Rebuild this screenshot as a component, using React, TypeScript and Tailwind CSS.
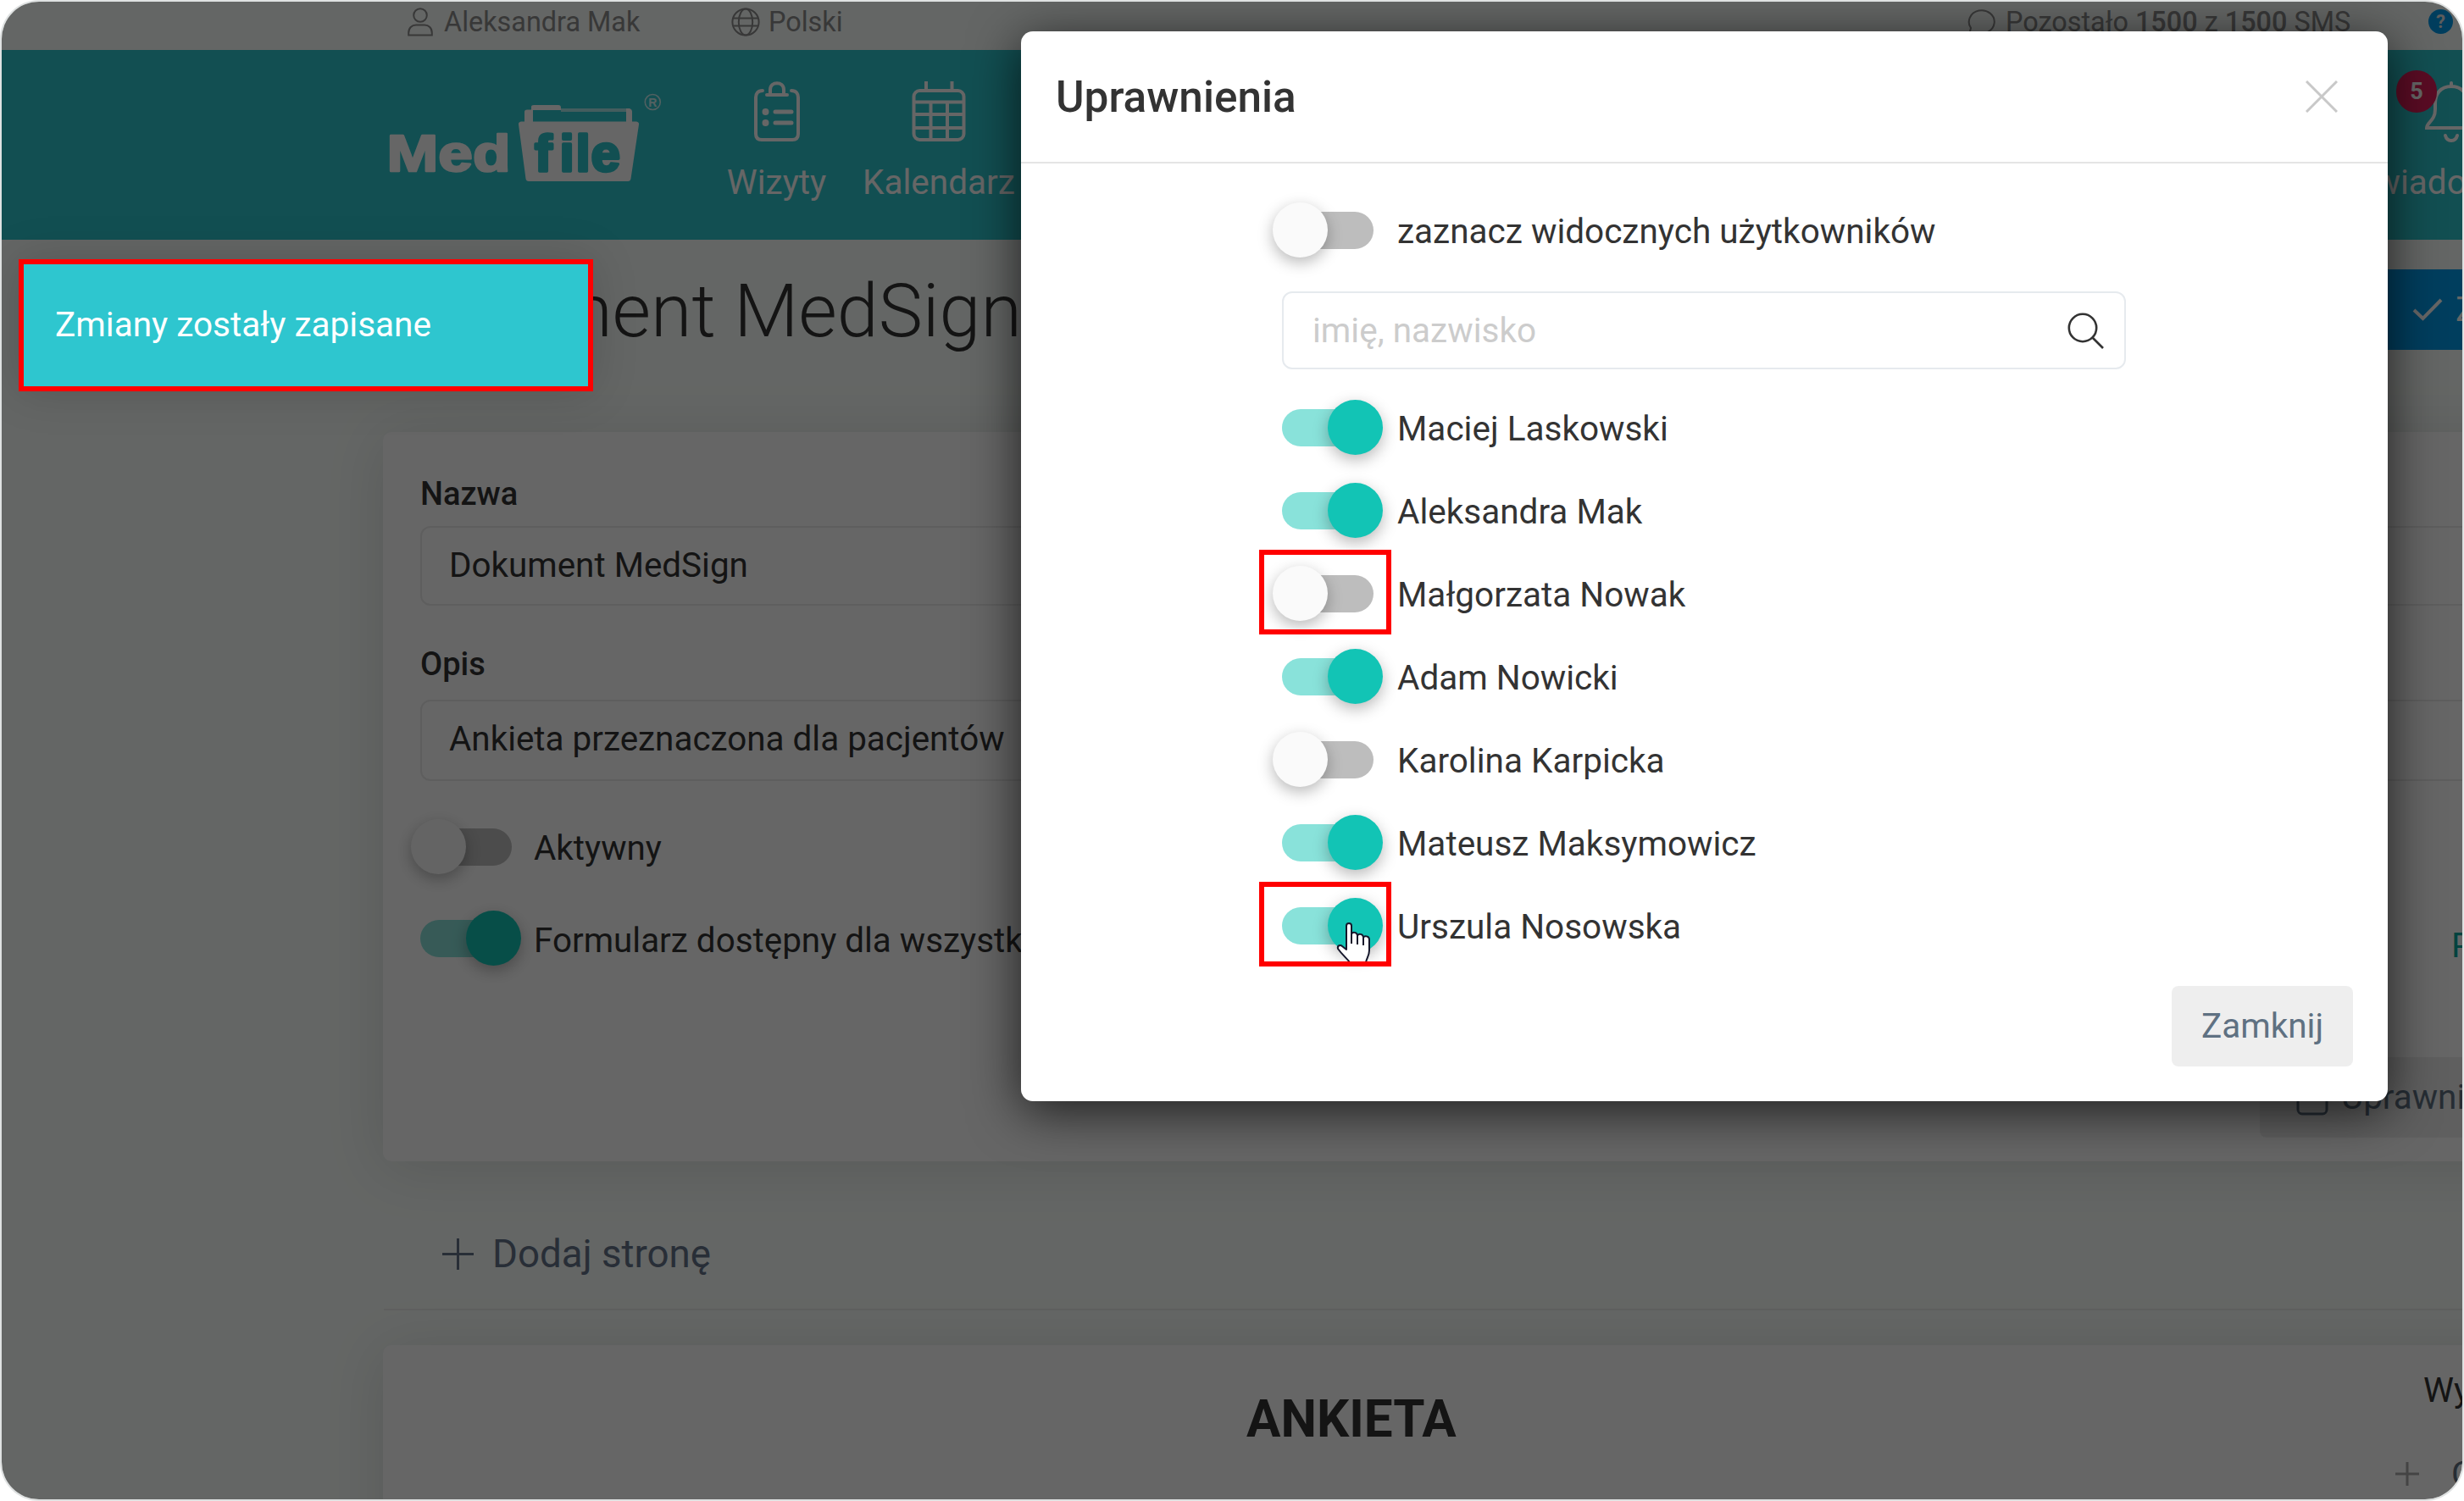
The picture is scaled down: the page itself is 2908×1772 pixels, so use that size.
type ToggleProps = {
  on: boolean
  marked?: boolean
  cursor?: boolean
}

const users = [
  { name: 'Maciej Laskowski', on: true },
  { name: 'Aleksandra Mak', on: true },
  { name: 'Małgorzata Nowak', on: false, marked: true },
  { name: 'Adam Nowicki', on: true },
  { name: 'Karolina Karpicka', on: false },
  { name: 'Mateusz Maksymowicz', on: true },
  { name: 'Urszula Nosowska', on: true, marked: true, cursor: true },
]

function HandCursor() {
  return (
    <svg className="absolute left-[64px] top-[28px]" width="42" height="54" viewBox="0 0 42 54">
      <path
        d="M12 33 V5 C12 1 18 1 18 5 V19 L18 15 C19 12 24 12 25 16 V20 V17 C26 14 31 14 32 18 V22 V19 C33 16 39 17 39 21 V34 C39 40 36 43 35 48 V52 H16 V48 C12 43 7 39 2 32 C1 28 5 27 7 29 L12 33 Z"
        fill="#fff"
        stroke="#15172b"
        strokeWidth="2"
        strokeLinejoin="round"
      />
      <path d="M18 14 V26 M25 17 V27 M32 19 V28" stroke="#15172b" strokeWidth="2" />
    </svg>
  )
}

function Toggle({ on, marked, cursor }: ToggleProps) {
  return (
    <div className="relative flex h-[66px] w-[108px] shrink-0 items-center">
      <div className={on ? 'h-[44px] w-full rounded-full bg-[#89e2da]' : 'h-[44px] w-full rounded-full bg-[#bdbdbd]'} />
      <div
        className={
          on
            ? 'absolute -right-[11px] top-0 size-[65px] rounded-full bg-[#12c4b5] shadow-[0_6px_18px_rgba(0,0,0,0.28)]'
            : 'absolute -left-[11px] top-0 size-[65px] rounded-full bg-[#fafafa] shadow-[0_6px_18px_rgba(0,0,0,0.28)]'
        }
      />
      {cursor && <HandCursor />}
      {marked && <div className="absolute -left-[27px] -top-[19px] h-[100px] w-[156px] border-[6px] border-[#ff0000]" />}
    </div>
  )
}

function TopBar() {
  return (
    <div className="relative flex h-[57px] shrink-0 items-center pb-[9px] pl-[479px] text-[32.4px] leading-[40px] text-[#8c8c8c]">
      <svg width="30" height="34" viewBox="0 0 30 34" fill="none" stroke="#8c8c8c" strokeWidth="2">
        <circle cx="15" cy="9" r="7.8" />
        <path d="M1.2 32.6 V30 C1.2 24 5 20.5 10 20.5 H20 C25 20.5 28.8 24 28.8 30 V32.6 Z" />
      </svg>
      <span className="ml-[13px] w-[339px]">Aleksandra Mak</span>
      <svg width="34" height="34" viewBox="0 0 34 34" fill="none" stroke="#8c8c8c" strokeWidth="2">
        <circle cx="17" cy="17" r="15.6" />
        <ellipse cx="17" cy="17" rx="8.2" ry="15.6" />
        <path d="M2.5 12.5 H31.5 M2.5 21.5 H31.5" />
      </svg>
      <span className="ml-[10px] w-[1415px]">Polski</span>
      <svg className="mt-[2px]" width="34" height="34" viewBox="0 0 34 34" fill="none" stroke="#8c8c8c" strokeWidth="2">
        <path d="M2.5 29 L4 23 A15 13.6 0 1 1 10.5 28.2 Z" />
      </svg>
      <span className="ml-[11px] whitespace-nowrap">
        Pozostało <span className="font-medium">1500</span> z <span className="font-medium">1500</span> SMS
      </span>
      <div className="absolute left-[2864px] top-[9px] flex size-[29px] items-center justify-center rounded-full bg-[#009beb] text-[22px] font-bold text-[#e5e5e5]">
        ?
      </div>
    </div>
  )
}

function Logo() {
  return (
    <svg className="shrink-0" width="340" height="224" viewBox="450 59 340 224" fontFamily="Liberation Sans" fontWeight="700" strokeLinejoin="round">
      <text x="456.5" y="202" fontSize="60.5" fill="#fff" stroke="#fff" strokeWidth="2.5" textLength="146" lengthAdjust="spacingAndGlyphs">
        Med
      </text>
      <path d="M619 146 V132 Q619 129.5 622 129.5 H627 V126 Q627 124 630 124 H659 Q662 124 662 127 V130 H629 V146 Z" fill="#fff" />
      <path d="M662 130 H740" stroke="#fff" strokeOpacity="0.6" strokeWidth="4" />
      <path d="M739 128 H743 Q746 129 746 132 V146 H739 Z" fill="#fff" />
      <path d="M615 143.5 H751 Q754.5 144 754 147 L744.5 211 Q744 214 741 214 H624 Q621 214 620.5 211 L612 147 Q611.5 144 615 143.5 Z" fill="#fff" />
      <text x="631 660.5 679.5 697.5" y="201.5" fontSize="62" fill="#2ec6cd" stroke="#2ec6cd" strokeWidth="3.5">
        file
      </text>
      <circle cx="770.3" cy="120.5" r="9" fill="none" stroke="#fff" strokeOpacity="0.75" strokeWidth="1.6" />
      <text x="770.3" y="125.5" textAnchor="middle" fontSize="14" fill="#fff" fillOpacity="0.8">
        R
      </text>
    </svg>
  )
}

function Header() {
  return (
    <div className="flex h-[224px] shrink-0 bg-[#2ec6cd] pl-[448px] text-[40.5px] leading-[48px] text-white">
      <Logo />
      <div className="ml-[67px] flex w-[119px] shrink-0 flex-col items-center pt-[37px]">
        <svg width="56" height="72" viewBox="0 0 56 72" fill="none" stroke="#fff" strokeWidth="4" strokeLinecap="round">
          <path d="M11 11 C5 11 3 15 3 19 V62 Q3 69 10 69 H46 Q53 69 53 62 V19 C53 15 51 11 45 11" />
          <path d="M16 16 H40" />
          <path d="M20 15 V10 C20 -0.5 36 -0.5 36 10 V15" />
          <path d="M26 36 H45 M26 49 H45" strokeWidth="5" />
          <circle cx="14.5" cy="36" r="2" />
          <circle cx="14.5" cy="49" r="2" />
        </svg>
        <span className="mt-[23px]">Wizyty</span>
      </div>
      <div className="ml-[32px] flex w-[200px] shrink-0 flex-col items-center pt-[37px]">
        <svg width="64" height="72" viewBox="0 0 64 72" fill="none" stroke="#fff" strokeWidth="4">
          <rect x="2.5" y="11" width="59" height="58" rx="7" />
          <path d="M17 0 V11 M47.5 0 V11 M3 24.5 H61 M3 39 H61 M3 55 H61 M22.5 25 V69 M42 25 V69" />
        </svg>
        <span className="mt-[23px]">Kalendarz</span>
      </div>
      <div className="relative ml-[1545px] flex w-[280px] shrink-0 flex-col items-center pt-[37px]">
        <svg width="64" height="72" viewBox="0 0 64 72" fill="none" stroke="#fff" strokeWidth="4" strokeLinecap="round">
          <path d="M32 2 V6 M32 6 C19 6 13 15 13 26 V33 C13 47 3 48 3 55 H61 C61 48 51 47 51 33 V26 C51 15 45 6 32 6 Z" />
          <path d="M25 64 C27 72 37 72 39 64" />
        </svg>
        <span className="mt-[23px]">Powiadomienia</span>
        <div className="absolute left-[75px] top-[24px] flex h-[50px] w-[48px] items-center justify-center rounded-full bg-[#e01e5a] text-[27px] font-bold">
          5
        </div>
      </div>
    </div>
  )
}

function FormCard() {
  return (
    <div className="ml-[450px] mt-[97px] flex h-[861px] w-[2600px] shrink-0 flex-col rounded-[10px] bg-white pl-[44px] pt-[50px] text-[40.4px] leading-[48px] text-[#333] shadow-[0_8px_70px_rgba(0,0,0,0.12)]">
      <span className="text-[38px] font-medium leading-[46px]">Nazwa</span>
      <div className="mt-[15px] flex h-[94px] w-[2500px] items-center rounded-[12px] border-2 border-[#ebebeb] pl-[32px]">Dokument MedSign</div>
      <span className="mt-[46px] text-[38px] font-medium leading-[46px]">Opis</span>
      <div className="mt-[19px] flex h-[96px] w-[2500px] items-center rounded-[12px] border-2 border-[#ebebeb] pb-[3px] pl-[32px]">
        Ankieta przeznaczona dla pacjentów
      </div>
      <div className="mt-[45px] flex items-center">
        <Toggle on={false} />
        <span className="ml-[26px] mt-1">Aktywny</span>
      </div>
      <div className="mt-[42px] flex items-center">
        <Toggle on />
        <span className="ml-[26px] mt-[6px] w-[2263px]">Formularz dostępny dla wszystkich</span>
        <span className="mt-[18px] text-[#00a89d]">P</span>
      </div>
      <div className="ml-[2171px] mt-[107px] flex h-[95px] w-[360px] items-center rounded-[8px] bg-[#eee] pl-[43px] text-[#5f7182]">
        <svg width="38" height="42" viewBox="0 0 38 42" fill="none" stroke="#5f7182" strokeWidth="3">
          <rect x="2" y="16" width="34" height="24" rx="5" />
          <path d="M9 16 V10 C9 -1 29 -1 29 10 V16" />
        </svg>
        <span className="ml-[15px]">Uprawnienia</span>
      </div>
    </div>
  )
}

function PreviewCard() {
  return (
    <div className="ml-[450px] mt-[41px] flex h-[300px] w-[2600px] shrink-0 rounded-[10px] bg-white text-[#333] shadow-[0_8px_70px_rgba(0,0,0,0.12)]">
      <h2 className="ml-[1019px] mt-[52px] w-[1356px] text-[60.2px] font-bold leading-[72px]">ANKIETA</h2>
      <div className="flex flex-col text-[40.5px] leading-[48px]">
        <span className="mt-[29px] pl-[33px]">Wy</span>
        <div className="mt-[51px] flex items-center text-[#5f7182]">
          <svg width="28" height="28" viewBox="0 0 28 28" stroke="#aaa" strokeWidth="3">
            <path d="M0 14 H28 M14 0 V28" />
          </svg>
          <span className="ml-[38px]">C</span>
        </div>
      </div>
    </div>
  )
}

function Page() {
  return (
    <div className="flex h-full w-full flex-col bg-[#fafffc]">
      <TopBar />
      <Header />
      <div className="mt-[35px] flex h-[95px] shrink-0 items-center pl-[444px]">
        <h1 className="mt-[2px] w-[2364px] shrink-0 text-[88px] font-light leading-[100px] text-[#333]">Dokument MedSign</h1>
        <div className="flex h-[95px] w-[250px] shrink-0 items-center bg-[#009beb] pl-[37px] text-[41px] text-white">
          <svg width="36" height="28" viewBox="0 0 36 28" fill="none" stroke="#fff" strokeWidth="4">
            <path d="M2 14 L12.5 24 L34 2" />
          </svg>
          <span className="ml-[15px]">Z</span>
        </div>
      </div>
      <FormCard />
      <div className="mt-[79px] flex h-[60px] shrink-0 items-center pl-[520px] text-[45.7px] text-[#65748b]">
        <svg width="37" height="37" viewBox="0 0 37 37" stroke="#65748b" strokeWidth="3">
          <path d="M0 18.5 H37 M18.5 0 V37" />
        </svg>
        <span className="ml-[22px] mt-[2px]">Dodaj stronę</span>
      </div>
      <div className="ml-[451px] mt-[35px] h-[2px] shrink-0 bg-[#eeefee]" />
      <PreviewCard />
    </div>
  )
}

function Modal() {
  return (
    <div className="absolute left-[1203px] top-[35px] h-[1263px] w-[1613px] rounded-[14px] bg-white text-[40.5px] leading-[48px] text-[#333] shadow-[0_12px_60px_rgba(0,0,0,0.7)]">
      <div className="flex h-[156px] items-center justify-between border-b-2 border-[#e5e5e5] pl-[41px] pr-[59px]">
        <h2 className="mt-[2px] text-[51.3px] font-medium">Uprawnienia</h2>
        <svg width="38" height="38" viewBox="0 0 38 38" stroke="#c8c8c8" strokeWidth="3">
          <path d="M1 1 L37 37 M37 1 L1 37" />
        </svg>
      </div>
      <div className="flex flex-col pl-[308px] pt-[46px]">
        <div className="flex items-center">
          <Toggle on={false} />
          <span className="ml-[28px] mt-[2px]">zaznacz widocznych użytkowników</span>
        </div>
        <div className="mt-[39px] flex h-[92px] w-[996px] items-center justify-between rounded-[12px] border-2 border-[#e6eaee] pl-[34px] pr-[24px] text-[#ccc]">
          imię, nazwisko
          <svg width="43" height="43" viewBox="0 0 43 43" fill="none" stroke="#333" strokeWidth="2.6">
            <circle cx="18" cy="18" r="16.2" />
            <path d="M29.5 29.5 L42 42" />
          </svg>
        </div>
        <div className="mt-[20px] flex flex-col">
          {users.map((user) => (
            <div key={user.name} className="flex h-[98px] items-center">
              <Toggle on={user.on} marked={user.marked} cursor={user.cursor} />
              <span className="ml-[28px] mt-[2px]">{user.name}</span>
            </div>
          ))}
        </div>
      </div>
      <div className="mt-[22px] flex justify-end pr-[41px]">
        <div className="flex h-[95px] w-[214px] items-center justify-center rounded-[8px] bg-[#eee] pb-[2px] text-[40.5px] text-[#5f7182]">Zamknij</div>
      </div>
    </div>
  )
}

export default function App() {
  return (
    <div className="h-[1772px] w-[2908px] overflow-hidden bg-white p-[2px] font-['Roboto',sans-serif]">
      <div className="relative h-[1768px] w-[2904px] overflow-hidden rounded-[44px] shadow-[0_0_0_2px_#dfe2e2]">
        <Page />
        <div className="absolute inset-0 bg-black/60" />

        {/* Save notification */}
        <div className="absolute left-[20px] top-[304px] flex h-[156px] w-[678px] items-center border-[6px] border-[#ff0000] bg-[#2ec6cf] pb-[2px] pl-[37px] text-[40.5px] text-white shadow-[0_0_50px_rgba(0,0,0,0.15)]">
          Zmiany zostały zapisane
        </div>

        <Modal />
      </div>
    </div>
  )
}
